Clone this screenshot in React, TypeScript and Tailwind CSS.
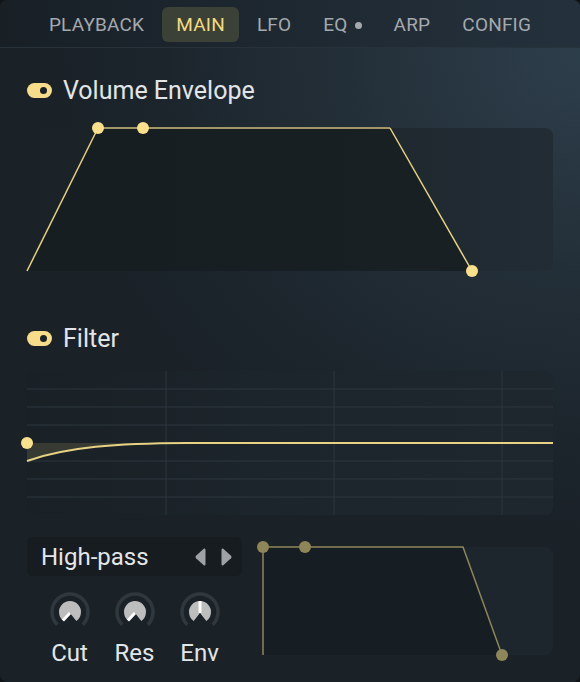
import React from "react";

const font = { fontFamily: "Roboto, 'Noto Sans', sans-serif" };

function Toggle() {
  return (
    <div className="w-[25px] h-[15px] rounded-full bg-[#f7dc8a] flex items-center justify-end pr-[5px]">
      <div className="w-[7px] h-[7px] rounded-full bg-[#1b2329]" />
    </div>
  );
}

function Knob({ angle }: { angle: number }) {
  const cx = 22, cy = 22;
  const R = 18, r = 11;
  const pt = (a: number, rad: number) => [cx + rad * Math.cos((a * Math.PI) / 180), cy + rad * Math.sin((a * Math.PI) / 180)];
  const [ax, ay] = pt(135, R);
  const [bx, by] = pt(45, R);
  const [dx1, dy1] = pt(125, r);
  const [dx2, dy2] = pt(55, r);
  const [px, py] = pt(angle, r);
  return (
    <svg width="44" height="44" viewBox="0 0 44 44">
      <path d={`M${ax} ${ay} A${R} ${R} 0 1 1 ${bx} ${by}`} fill="none" stroke="#30383e" strokeWidth="3.5" />
      <path d={`M${cx} ${cy + 1} L${dx1} ${dy1} A${r} ${r} 0 1 1 ${dx2} ${dy2} Z`} fill="#bdbdbd" />
      <line x1={cx} y1={cy + 1} x2={px} y2={py} stroke="#ffffff" strokeWidth="3" strokeLinecap="butt" />
    </svg>
  );
}

export default function App() {
  const tabs = ["PLAYBACK", "MAIN", "LFO", "EQ", "ARP", "CONFIG"];
  return (
    <div className="w-[580px] h-[682px] bg-[#111518]" style={font}>
      <div className="w-[580px] h-[682px] rounded-lg overflow-hidden flex flex-col bg-[radial-gradient(ellipse_90%_70%_at_100%_8%,#2d3e4b_0%,#232f38_45%,#1c252c_80%,#1a2228_100%)]">
        {/* Tab bar */}
        <div className="h-12 shrink-0 flex items-center justify-center gap-[4px] border-b border-[#27323a] bg-[linear-gradient(90deg,#182026_0%,#1e2831_50%,#24313c_100%)]">
          {tabs.map((t) => (
            <div
              key={t}
              className={
                t === "MAIN"
                  ? "h-[35px] mt-[1px] px-[14px] flex items-center rounded-md bg-[#3b4137] text-[#f5d97e] text-[19px] tracking-[0.2px]"
                  : "h-[35px] mt-[1px] px-[14px] flex items-center text-[#a4a9ae] text-[19px] tracking-[0.2px]"
              }
            >
              <span className="mt-[2px]">{t}</span>
              {t === "EQ" && <span className="ml-[7px] mt-[2px] w-[7px] h-[7px] rounded-full bg-[#a4a9ae] inline-block" />}
            </div>
          ))}
        </div>

        <div className="px-[27px] flex flex-col">
          {/* Volume envelope header */}
          <div className="mt-[27px] h-[30px] flex items-center gap-[11px]">
            <Toggle />
            <span className="text-[25px] text-[#e2e5e8] leading-none">Volume Envelope</span>
          </div>
          {/* Volume envelope graph */}
          <div className="mt-[23px] h-[143px] w-[526px] rounded-lg relative bg-[linear-gradient(90deg,#1a2227_0%,#1d262c_50%,#222c34_100%)]">
            <svg className="absolute inset-0 overflow-visible" width="526" height="143" viewBox="0 0 526 143">
              <polygon points="0,143 71,0 363,0 445,143" fill="#151c20" fillOpacity="0.7" />
              <line x1="71" y1="0" x2="363" y2="0" stroke="#a19766" strokeWidth="2" />
              <polyline points="0,143 71,0" fill="none" stroke="#e8d27f" strokeWidth="1.5" />
              <polyline points="363,0 445,143" fill="none" stroke="#e8d27f" strokeWidth="1.5" />
              <circle cx="71" cy="0" r="6" fill="#fbe08c" />
              <circle cx="116" cy="0" r="6" fill="#fbe08c" />
              <circle cx="445" cy="143" r="6" fill="#fbe08c" />
            </svg>
          </div>

          {/* Filter header */}
          <div className="mt-[52px] h-[30px] flex items-center gap-[11px]">
            <Toggle />
            <span className="text-[25px] text-[#e2e5e8] leading-none">Filter</span>
          </div>
          {/* Filter graph */}
          <div className="mt-[18px] h-[144px] w-[526px] rounded-lg relative bg-[linear-gradient(90deg,#192126_0%,#1c252b_50%,#1e272e_100%)]">
            <svg className="absolute inset-0 overflow-visible" width="526" height="144" viewBox="0 0 526 144">
              {[18, 36, 54, 90, 108, 126].map((y) => (
                <line key={y} x1="0" y1={y} x2="526" y2={y} stroke="#2c363d" strokeWidth="1" />
              ))}
              {[139, 307, 475].map((x) => (
                <line key={x} x1={x} y1="0" x2={x} y2="144" stroke="#2c363d" strokeWidth="1" />
              ))}
              <path d="M0 72 L160 72 C 90 72.3 40 76 0 90 Z" fill="#e8d283" fillOpacity="0.14" />
              <path d="M0 90 C 40 76 90 72.3 160 72 L526 72" fill="none" stroke="#e8d283" strokeWidth="2" />
              <circle cx="0" cy="72" r="6" fill="#fbe08c" />
            </svg>
          </div>

          {/* Bottom row */}
          <div className="mt-[22px] flex">
            <div className="w-[215px] flex flex-col">
              <div className="h-[39px] rounded-md bg-[#161c20] flex items-center pl-[14px] pr-[8px]">
                <span className="text-[24px] text-[#e3e6e8] leading-none flex-1">High-pass</span>
                <svg width="40" height="20" viewBox="0 0 40 20">
                  <path d="M10 1.5 Q11.5 1 11.5 3 L11.5 17 Q11.5 19 10 18.5 L2 11.3 Q0.8 10 2 8.7 Z" fill="#9ea2a6" />
                  <path d="M29 1.5 Q27.5 1 27.5 3 L27.5 17 Q27.5 19 29 18.5 L37 11.3 Q38.2 10 37 8.7 Z" fill="#9ea2a6" />
                </svg>
              </div>
              <div className="mt-[14px] ml-[10px] flex">
                {[
                  { l: "Cut", a: 130 },
                  { l: "Res", a: 130 },
                  { l: "Env", a: 270 },
                ].map((k) => (
                  <div key={k.l} className="w-[65px] flex flex-col items-center">
                    <Knob angle={k.a} />
                    <span className="mt-[6px] text-[24px] leading-[26px] text-[#e3e6e8]">{k.l}</span>
                  </div>
                ))}
              </div>
            </div>
            <div className="ml-[21px] mt-[10px] w-[290px] h-[108px] rounded-lg relative bg-[#1d262c]">
              <svg className="absolute inset-0 overflow-visible" width="290" height="108" viewBox="0 0 290 108">
                <polygon points="0,108 0,0 200,0 239,108" fill="#151b1f" fillOpacity="0.7" />
                <polyline points="0,108 0,0 200,0 239,108" fill="none" stroke="#8e8659" strokeWidth="1.5" />
                <circle cx="0" cy="0" r="6" fill="#8e8659" />
                <circle cx="42" cy="0" r="6" fill="#8e8659" />
                <circle cx="239" cy="108" r="6" fill="#8e8659" />
              </svg>
            </div>
          </div>
        </div>
      </div>
    </div>
  );
}
